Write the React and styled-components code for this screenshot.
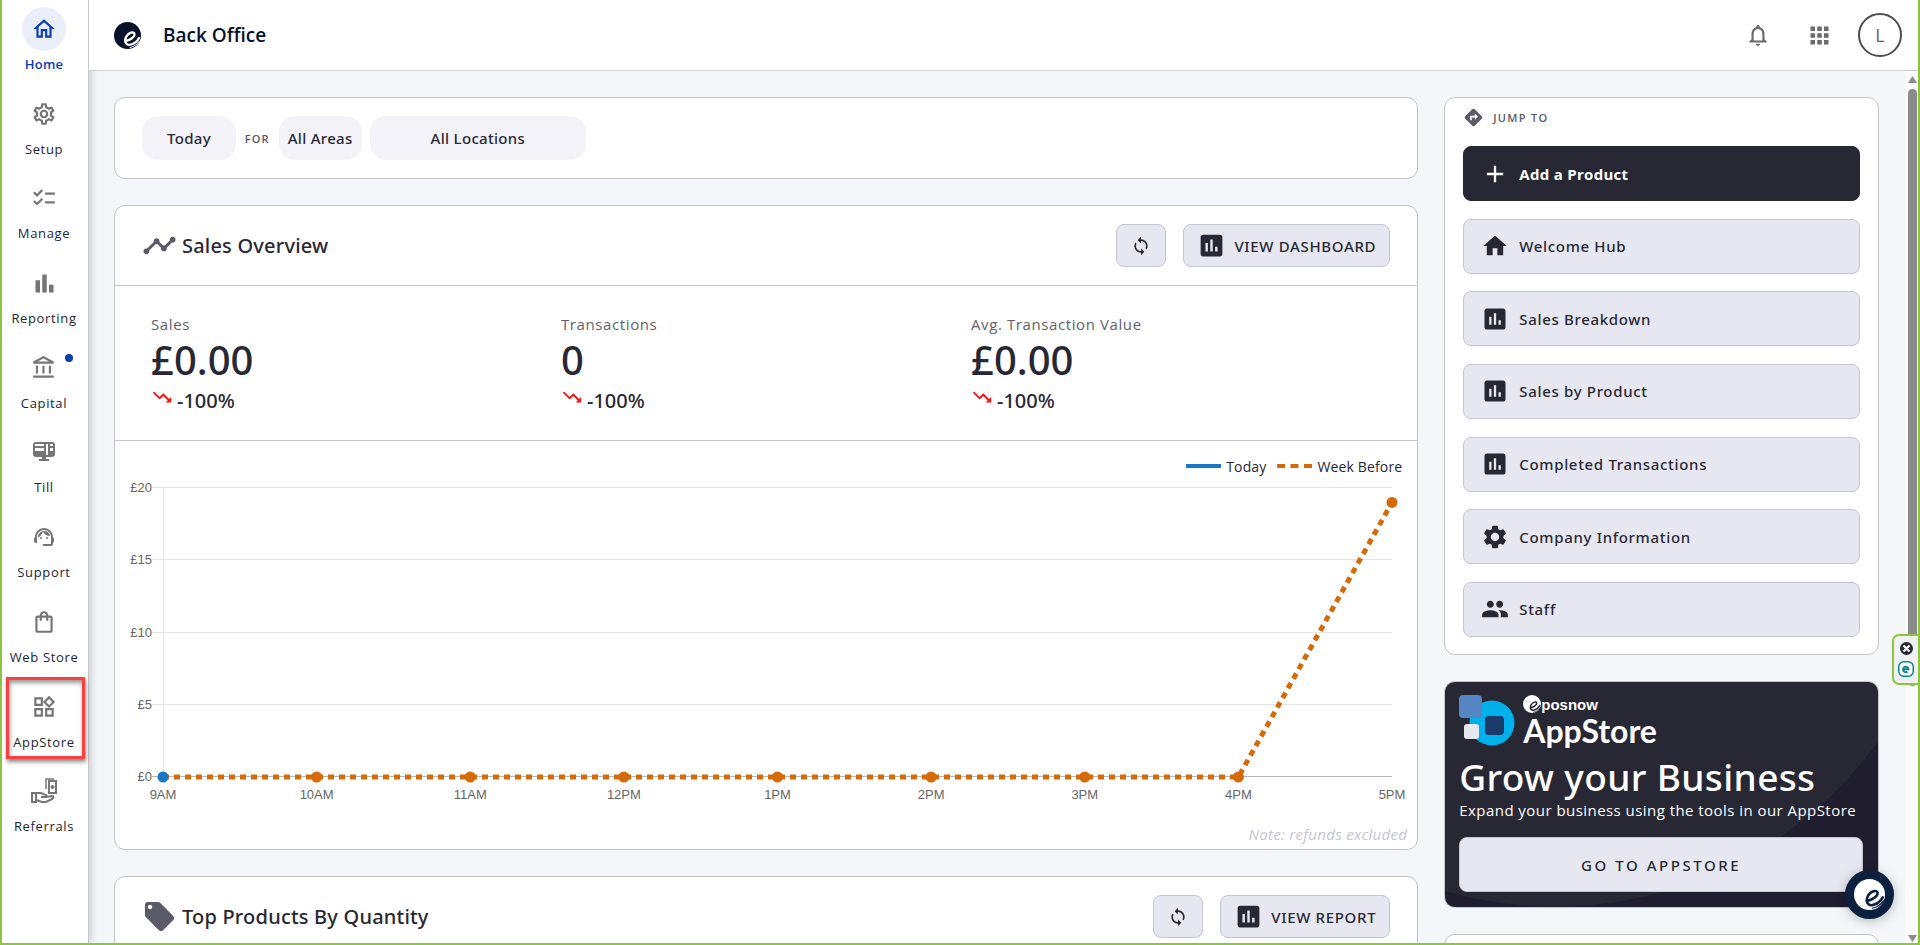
import React, { useLayoutEffect, useRef, useState } from "react";
import styled, { createGlobalStyle, css } from "styled-components";
import {
  MdOutlineHome, MdOutlineSettings, MdChecklist, MdBarChart, MdOutlineAccountBalance, MdSupportAgent,
  MdOutlineShoppingBag, MdOutlineWidgets, MdNotificationsNone, MdApps, MdDirections, MdAdd, MdHome,
  MdAssessment, MdSettings, MdPeople, MdTimeline, MdLocalOffer, MdSync, MdTrendingDown,
} from "react-icons/md";

const c = {
  green: "#8cc63f",
  ink: "#282834",
  muted: "#5a5a68",
  line: "#c5c4d2",
  cardLine: "#c2c4c8",
  soft: "#e7e7f1",
  pill: "#f4f3fa",
  page: "#f3f7fa",
  blue: "#0a3cb4",
  today: "#1578c8",
  week: "#d66a08",
};

const GlobalStyle = createGlobalStyle`
  * { box-sizing: border-box; }
  body { margin: 0; font-family: "Open Sans", "Noto Sans", sans-serif; color: ${c.ink}; }
  button { font: inherit; color: inherit; cursor: pointer; margin: 0; padding: 0; }
  h1, h2, p, ul, dl, dd { margin: 0; padding: 0; }
  svg { display: block; }
`;

const medium = css`
  font-family: "Noto Sans", "Open Sans", sans-serif;
  font-weight: 500;
`;

const Frame = styled.div`
  display: flex;
  height: 100vh;
  overflow: hidden;
  background: #fff;
  border: solid ${c.green};
  border-width: 0 2px 2px 2px;
`;

/* ---------- sidebar ---------- */
const Sidebar = styled.nav`
  flex: none;
  width: 87px;
  border-right: 1px solid #c8c8c8;
  box-shadow: 1px 0 8px rgba(0, 0, 0, 0.22);
  z-index: 1;
  background: #fff;
`;
const NavList = styled.ul`
  list-style: none;
  display: grid;
  grid-auto-rows: 1fr;
  height: 847px;
`;
const NavItem = styled.li`
  position: relative;
  padding: 7px 2px 0 0;
`;
const NavLink = styled.a`
  display: flex;
  flex-direction: column;
  align-items: center;
  gap: 3px;
  font-size: 13px;
  line-height: 20px;
  letter-spacing: 0.05em;
  text-decoration: none;
  white-space: nowrap;
  color: #1b2536;
  ${(p) => p.$active && css`
    color: ${c.blue};
    font-weight: 600;
    letter-spacing: 0.02em;
  `}
`;
const NavIcon = styled.span`
  display: grid;
  place-items: center;
  width: 44px;
  height: 44px;
  border-radius: 50%;
  color: ${(p) => (p.$active ? c.blue : "#757575")};
  background: ${(p) => (p.$active ? "#e9eefa" : "transparent")};
`;
const NewDot = styled.span`
  position: absolute;
  top: 15px;
  left: 63px;
  width: 8px;
  height: 8px;
  border-radius: 50%;
  background: ${c.blue};
`;
const Highlight = styled.span`
  position: absolute;
  inset: -1px 3px 3px 4px;
  border: 3px solid #f94144;
  box-shadow: 1px 3px 4px rgba(0, 0, 0, 0.45), inset 1px 3px 4px rgba(0, 0, 0, 0.4);
  pointer-events: none;
`;

/* ---------- header ---------- */
const Body = styled.div`
  flex: 1;
  min-width: 0;
  display: flex;
  flex-direction: column;
`;
const Header = styled.header`
  flex: none;
  display: flex;
  align-items: center;
  height: 71px;
  padding: 0 16px 0 25px;
  border-bottom: 1px solid #cfcfcf;
  background: #fff;
  position: relative;
  z-index: 2;
`;
const PageTitle = styled.h1`
  flex: 1;
  margin-left: 22px;
  font-size: 19px;
  line-height: 28px;
  font-weight: 600;
  color: #06122a;
`;
const HeaderTools = styled.div`
  display: flex;
  align-items: center;
  color: #6b6b6b;
`;
const IconButton = styled.button`
  display: grid;
  place-items: center;
  width: 44px;
  height: 44px;
  margin-right: 17px;
  border: 0;
  background: none;
`;
const Avatar = styled.button`
  width: 44px;
  height: 44px;
  border: 2px solid #4d4d4d;
  border-radius: 50%;
  background: #fff;
  color: #666;
  font-size: 18px;
`;

/* ---------- content ---------- */
const Scroller = styled.div`
  flex: 1;
  min-height: 0;
  display: flex;
  background: ${c.page};
`;
const Content = styled.main`
  flex: 1;
  min-width: 0;
  overflow: hidden;
  display: grid;
  grid-template-columns: minmax(0, 3fr) minmax(0, 1fr);
  align-items: start;
  gap: 26px;
  padding: 26px 26px 0 25px;
`;
const Column = styled.div`
  display: flex;
  flex-direction: column;
  gap: 26px;
`;
const Card = styled.section`
  background: #fff;
  border: 1px solid ${c.cardLine};
  border-radius: 11px;
`;
const Filters = styled(Card)`
  display: flex;
  align-items: center;
  padding: 18px 27px;
`;
const Pill = styled.button`
  height: 44px;
  border: 0;
  border-radius: 16px;
  padding: 0 ${(p) => p.$pad}px;
  background: ${c.pill};
  font-size: 15px;
  line-height: 22px;
  ${medium}
  letter-spacing: 0.02em;
  margin-right: 8px;
  white-space: nowrap;
`;
const ForText = styled.span`
  margin: 0 9px 0 1px;
  font-size: 11px;
  font-weight: 600;
  letter-spacing: 0.1em;
  color: ${c.muted};
`;
const CardHead = styled.div`
  display: flex;
  align-items: center;
  padding: 18px 27px;
  border-bottom: 1px solid ${c.line};
`;
const HeadIcon = styled.span`
  display: grid;
  place-items: center;
  width: 35px;
  margin-right: 5px;
  color: ${c.muted};
`;
const CardTitle = styled.h2`
  flex: 1;
  font-size: 20px;
  line-height: 28px;
  ${medium}
  letter-spacing: 0.01em;
`;
const SoftButton = styled.button`
  display: flex;
  align-items: center;
  justify-content: center;
  height: 43px;
  border: 1px solid ${c.line};
  border-radius: 8px;
  background: ${c.soft};
  font-size: 15px;
  line-height: 22px;
  ${medium}
  letter-spacing: 0.045em;
  white-space: nowrap;
`;
const RefreshButton = styled(SoftButton)`
  width: 50px;
  margin-right: 17px;
`;
const ReportButton = styled(SoftButton)`
  gap: 8px;
  padding: 0 13px;
`;
const Stats = styled.dl`
  display: grid;
  grid-template-columns: 410px 410px 1fr;
  padding: 28px 36px 26px;
  border-bottom: 1px solid ${c.line};
`;
const StatLabel = styled.dt`
  font-size: 15px;
  line-height: 20px;
  letter-spacing: 0.04em;
  color: #62626c;
`;
const StatValue = styled.dd`
  font-size: 40px;
  line-height: 52px;
  ${medium}
`;
const StatChange = styled.dd`
  display: flex;
  align-items: center;
  gap: 4px;
  line-height: 27px;
  font-size: 20px;
  ${medium}
  svg { color: #f01414; margin-bottom: 6px; }
`;
const ChartArea = styled.div`
  padding: 11px 9px 0 0;
`;
const Legend = styled.div`
  display: flex;
  justify-content: flex-end;
  align-items: center;
  gap: 11px;
  padding-right: 6px;
  height: 28px;
  font-size: 14px;
  letter-spacing: 0.01em;
`;
const LegendItem = styled.span`
  display: flex;
  align-items: center;
  gap: 5px;
`;
const ChartBox = styled.div`
  height: 330px;
  margin-right: -9px;
`;
const Note = styled.p`
  text-align: right;
  font-size: 15px;
  line-height: 22px;
  letter-spacing: 0.02em;
  padding: 13px 1px 4px 0;
  font-style: italic;
  color: ${c.line};
`;

/* ---------- right column ---------- */
const JumpCard = styled(Card)`
  padding: 7px 18px 17px;
`;
const JumpHead = styled.h2`
  display: flex;
  align-items: center;
  gap: 9px;
  height: 24px;
  margin-bottom: 17px;
  font-size: 11px;
  font-weight: 600;
  letter-spacing: 0.12em;
  color: ${c.muted};
`;
const JumpList = styled.div`
  display: flex;
  flex-direction: column;
  justify-content: space-between;
  min-height: 491px;
`;
const JumpButton = styled(SoftButton)`
  justify-content: flex-start;
  gap: 10px;
  height: 55px;
  padding-left: 17px;
  ${(p) => p.$primary && css`
    background: ${c.ink};
    border-color: ${c.ink};
    color: #fff;
    font-family: "Open Sans", "Noto Sans", sans-serif;
    font-weight: 700;
    letter-spacing: 0.02em;
  `}
`;
const Promo = styled(Card)`
  position: relative;
  overflow: hidden;
  padding: 13px 15px 15px 14px;
  background: radial-gradient(circle at 110px -174px, ${c.ink} 398px, #201d2e 399px);
  color: #fff;
`;
const PromoTitle = styled.h2`
  margin-top: 6px;
  font-size: 37px;
  line-height: 47px;
  ${medium}
  letter-spacing: 0.01em;
  white-space: nowrap;
`;
const PromoText = styled.p`
  font-size: 15px;
  line-height: 20px;
  letter-spacing: 0.03em;
  white-space: nowrap;
`;
const PromoButton = styled(SoftButton)`
  width: 100%;
  height: 55px;
  margin-top: 17px;
  letter-spacing: 0.17em;
  color: ${c.ink};
`;
const LogoLockup = styled.div`
  display: flex;
  gap: 8px;
`;
const Words = styled.div`
  display: flex;
  flex-direction: column;
`;
const Brand = styled.span`
  display: flex;
  height: 20px;
  font: 700 15px/20px "Liberation Sans", sans-serif;
`;
const Product = styled.span`
  font: 700 32px/32px Lato, sans-serif;
`;
const NextCard = styled(Card)`
  height: 60px;
`;

/* ---------- scroll bar and floating parts ---------- */
const Track = styled.div`
  flex: none;
  display: flex;
  flex-direction: column;
  align-items: flex-end;
  gap: 6px;
  width: 13px;
  padding: 5px 1px 1px;
  background: #fbfbfb;
`;
const Thumb = styled.div`
  width: 9px;
  height: 597px;
  border-radius: 5px;
  background: #8b8b8b;
  margin-bottom: auto;
`;
const Chat = styled.button`
  position: fixed;
  right: 26px;
  bottom: 26px;
  display: grid;
  place-items: center;
  width: 49px;
  height: 49px;
  border: 0;
  border-radius: 50%;
  background: #0c2140;
  box-shadow: 0 2px 12px rgba(0, 0, 0, 0.25);
  z-index: 3;
`;
const SideWidget = styled.aside`
  position: fixed;
  right: 0;
  top: 634px;
  display: flex;
  flex-direction: column;
  align-items: center;
  justify-content: center;
  gap: 6px;
  width: 28px;
  height: 51px;
  border: 2px solid ${c.green};
  border-radius: 7px 0 0 7px;
  background: #f1f1f1;
  z-index: 3;
`;
const WidgetButton = styled.button`
  border: 0;
  background: none;
`;

/* ---------- drawings ---------- */
function EposMark({ size, disc, cut }) {
  return (
    <svg width={size} height={size} viewBox="0 0 54 54" aria-hidden="true">
      <circle cx="27" cy="27" r="27" fill={disc} />
      <g fill="none" stroke={cut} strokeLinecap="round">
        <path d="M24 38 C32 36 42 30 41 24 C40 18 29 21 24 30 C19 41 26 48 34 45 C41 43 47 38 50 32" strokeWidth="4.5" />
        <path d="M32 51 C41 49 47 44 51 38" strokeWidth="2" />
      </g>
    </svg>
  );
}

function TillIcon() {
  return (
    <svg width="22" height="22" viewBox="0 0 22 22" fill="#757575" aria-hidden="true">
      <path fillRule="evenodd" d="M3 1h16a3 3 0 0 1 3 3v9a3 3 0 0 1-3 3h-6v2h3v2H6v-2h3v-2H3a3 3 0 0 1-3-3V4a3 3 0 0 1 3-3ZM2 3v2h9V3ZM2 7v3h9V7ZM13 3v11h2V3ZM17 3v2h3V3ZM17 7v3h3V7Z" />
    </svg>
  );
}

function ReferralIcon() {
  return (
    <svg width="28" height="28" viewBox="0 0 28 28" fill="none" stroke="#757575" strokeWidth="2" aria-hidden="true">
      <path d="M2 16h4v9H2z" />
      <path d="M6 16h5l5 2c1 1 0 2-1 2h-4M16 20l6-1c2 0 2 2 0 3l-6 3H12l-6-2" />
      <path d="M16 12V2h8" strokeWidth="1.5" />
      <rect x="19" y="4" width="7" height="12" />
      <circle cx="22.5" cy="10" r="2" fill="#757575" stroke="none" />
    </svg>
  );
}

function AppLogo() {
  return (
    <svg width="56" height="51" viewBox="0 0 56 51" aria-hidden="true">
      <circle cx="33" cy="28" r="22.5" fill="#00b0ea" />
      <rect width="23" height="23" rx="4" fill="#5685c4" />
      <rect x="5" y="29" width="15" height="15" rx="3" fill="#e7e7f1" />
      <rect x="26" y="21" width="19" height="19" rx="4" fill="#1b3a69" />
    </svg>
  );
}

const hours = ["9AM", "10AM", "11AM", "12PM", "1PM", "2PM", "3PM", "4PM", "5PM"];
const weekBefore = [0, 0, 0, 0, 0, 0, 0, 0, 19];
const ticks = [20, 15, 10, 5, 0];

function SalesChart() {
  const box = useRef(null);
  const [width, setWidth] = useState(1302);
  useLayoutEffect(() => {
    const measure = () => setWidth(box.current.clientWidth);
    measure();
    const watcher = new ResizeObserver(measure);
    watcher.observe(box.current);
    return () => watcher.disconnect();
  }, []);

  const left = 48;
  const right = width - 25;
  const x = (i) => left + ((right - left) * i) / (hours.length - 1);
  const y = (v) => 297 - (v * 289) / 20;
  const path = weekBefore.map((v, i) => `${i ? "L" : "M"}${x(i)} ${y(v)}`).join(" ");

  return (
    <ChartBox ref={box}>
      <svg width={width} height="330" role="img" aria-label="Sales by hour" fill="#666" fontFamily="Liberation Sans, Arial, sans-serif" fontSize="13">
        {ticks.map((v) => (
          <g key={v}>
            <line x1={left - 11} x2={right} y1={Math.round(y(v)) - 0.5} y2={Math.round(y(v)) - 0.5} stroke={v ? "#e3e3e3" : "#b5b5b5"} />
            <text x={left - 11} y={y(v) + 4} textAnchor="end">£{v}</text>
          </g>
        ))}
        <line x1={left + 0.5} x2={left + 0.5} y1={y(20)} y2={y(0)} stroke="#e3e3e3" />
        <path d={path} fill="none" stroke={c.week} strokeWidth="5" strokeDasharray="6 5" />
        {weekBefore.map((v, i) => (
          <circle key={hours[i]} cx={x(i)} cy={y(v)} r="5.5" fill={i ? c.week : c.today} />
        ))}
        {hours.map((h, i) => (
          <text key={h} x={x(i)} y="319" textAnchor="middle">{h}</text>
        ))}
      </svg>
    </ChartBox>
  );
}

/* ---------- data ---------- */
const nav = [
  { label: "Home", icon: <MdOutlineHome size={26} />, active: true },
  { label: "Setup", icon: <MdOutlineSettings size={26} /> },
  { label: "Manage", icon: <MdChecklist size={26} /> },
  { label: "Reporting", icon: <MdBarChart size={27} /> },
  { label: "Capital", icon: <MdOutlineAccountBalance size={26} />, dot: true },
  { label: "Till", icon: <TillIcon /> },
  { label: "Support", icon: <MdSupportAgent size={24} /> },
  { label: "Web Store", icon: <MdOutlineShoppingBag size={26} /> },
  { label: "AppStore", icon: <MdOutlineWidgets size={26} />, boxed: true },
  { label: "Referrals", icon: <ReferralIcon /> },
];
const stats = [
  ["Sales", "£0.00"],
  ["Transactions", "0"],
  ["Avg. Transaction Value", "£0.00"],
];
const jumps = [
  ["Add a Product", MdAdd],
  ["Welcome Hub", MdHome],
  ["Sales Breakdown", MdAssessment],
  ["Sales by Product", MdAssessment],
  ["Completed Transactions", MdAssessment],
  ["Company Information", MdSettings],
  ["Staff", MdPeople],
];

function HeadButtons({ label }) {
  return (
    <>
      <RefreshButton aria-label="Refresh"><MdSync size={20} /></RefreshButton>
      <ReportButton><MdAssessment size={29} />{label}</ReportButton>
    </>
  );
}

export default function App() {
  return (
    <>
      <GlobalStyle />
      <Frame>
        <Sidebar>
          <NavList>
            {nav.map((n) => (
              <NavItem key={n.label}>
                <NavLink href="#" $active={n.active}>
                  <NavIcon $active={n.active}>{n.icon}</NavIcon>
                  {n.label}
                </NavLink>
                {n.dot && <NewDot />}
                {n.boxed && <Highlight />}
              </NavItem>
            ))}
          </NavList>
        </Sidebar>
        <Body>
          <Header>
            <EposMark size={27} disc="#06122a" cut="#fff" />
            <PageTitle>Back Office</PageTitle>
            <HeaderTools>
              <IconButton aria-label="Notifications"><MdNotificationsNone size={26} /></IconButton>
              <IconButton aria-label="Apps"><MdApps size={27} /></IconButton>
              <Avatar>L</Avatar>
            </HeaderTools>
          </Header>
          <Scroller>
            <Content>
              <Column>
                <Filters>
                  <Pill $pad={25}>Today</Pill>
                  <ForText>FOR</ForText>
                  <Pill $pad={9}>All Areas</Pill>
                  <Pill $pad={61}>All Locations</Pill>
                </Filters>
                <Card>
                  <CardHead>
                    <HeadIcon><MdTimeline size={35} /></HeadIcon>
                    <CardTitle>Sales Overview</CardTitle>
                    <HeadButtons label="VIEW DASHBOARD" />
                  </CardHead>
                  <Stats>
                    {stats.map(([label, value]) => (
                      <div key={label}>
                        <StatLabel>{label}</StatLabel>
                        <StatValue>{value}</StatValue>
                        <StatChange><MdTrendingDown size={22} />-100%</StatChange>
                      </div>
                    ))}
                  </Stats>
                  <ChartArea>
                    <Legend>
                      <LegendItem>
                        <svg width="35" height="4"><rect width="35" height="4" fill={c.today} /></svg>
                        Today
                      </LegendItem>
                      <LegendItem>
                        <svg width="35" height="4"><path d="M0 2H35" stroke={c.week} strokeWidth="4" strokeDasharray="8 5.5" /></svg>
                        Week Before
                      </LegendItem>
                    </Legend>
                    <SalesChart />
                    <Note>Note: refunds excluded</Note>
                  </ChartArea>
                </Card>
                <Card>
                  <CardHead>
                    <HeadIcon><MdLocalOffer size={35} /></HeadIcon>
                    <CardTitle>Top Products By Quantity</CardTitle>
                    <HeadButtons label="VIEW REPORT" />
                  </CardHead>
                </Card>
              </Column>
              <Column>
                <JumpCard>
                  <JumpHead><MdDirections size={21} />JUMP TO</JumpHead>
                  <JumpList>
                    {jumps.map(([label, Icon], i) => (
                      <JumpButton key={label} $primary={i === 0}><Icon size={28} />{label}</JumpButton>
                    ))}
                  </JumpList>
                </JumpCard>
                <Promo>
                  <LogoLockup>
                    <AppLogo />
                    <Words>
                      <Brand><EposMark size={18} disc="#fff" cut={c.ink} />posnow</Brand>
                      <Product>AppStore</Product>
                    </Words>
                  </LogoLockup>
                  <PromoTitle>Grow your Business</PromoTitle>
                  <PromoText>Expand your business using the tools in our AppStore</PromoText>
                  <PromoButton>GO TO APPSTORE</PromoButton>
                </Promo>
                <NextCard />
              </Column>
            </Content>
            <Track aria-hidden="true">
              <svg width="9" height="7"><path d="M4.5 0L9 7H0Z" fill="#8b8b8b" /></svg>
              <Thumb />
              <svg width="9" height="7"><path d="M0 0H9L4.5 7Z" fill="#8b8b8b" /></svg>
            </Track>
          </Scroller>
        </Body>
      </Frame>
      <Chat aria-label="Chat"><EposMark size={31} disc="#fff" cut="#0c2140" /></Chat>
      <SideWidget>
        <WidgetButton aria-label="Close">
          <svg width="13" height="13" viewBox="0 0 13 13"><circle cx="6.5" cy="6.5" r="6.5" fill="#282834" /><path d="M3.5 3.5l6 6M9.5 3.5l-6 6" stroke="#fff" strokeWidth="2.2" /></svg>
        </WidgetButton>
        <WidgetButton aria-label="Open">
          <svg width="16" height="16" viewBox="0 0 16 16" fill="none" stroke="#0a8590"><rect x="0.75" y="0.75" width="14.5" height="14.5" rx="5" strokeWidth="1.5" fill="#fff" /><path d="M5 8.2h5.500a2.700 2.700 0 1 0-1 2.400" strokeWidth="2" /></svg>
        </WidgetButton>
      </SideWidget>
    </>
  );
}
